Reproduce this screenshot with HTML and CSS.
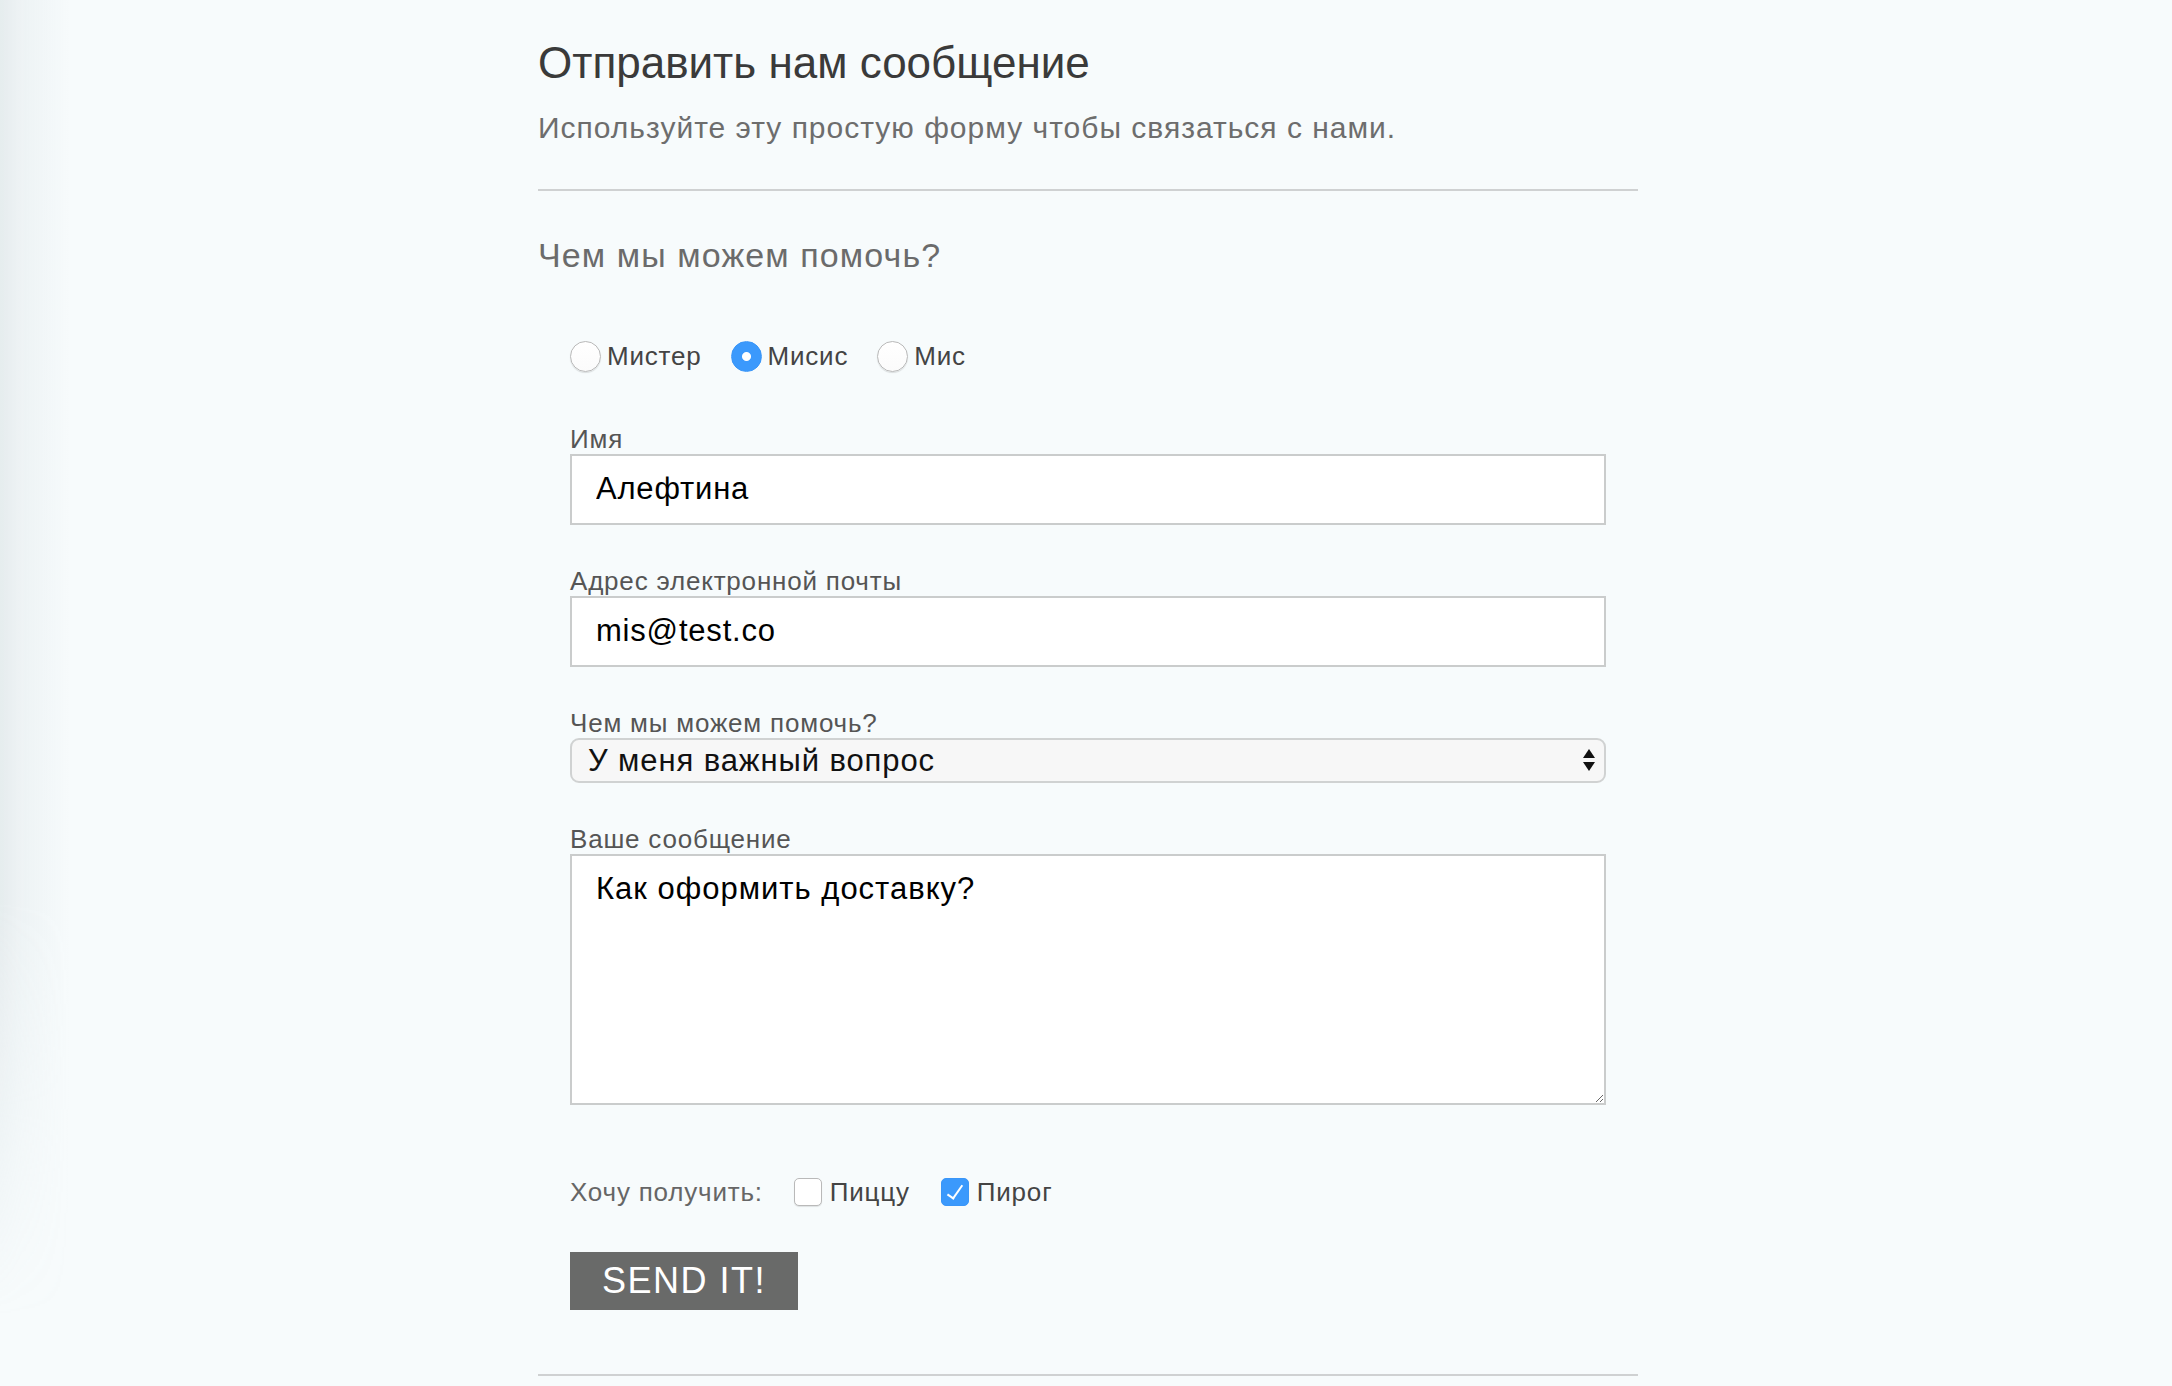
FILE: index.html
```html
<!DOCTYPE html>
<html lang="ru">
<head>
<meta charset="utf-8">
<title>Отправить нам сообщение</title>
<link rel="stylesheet" href="styles.css">
</head>
<body>
<main class="page">
  <header class="intro">
    <h1 class="title">Отправить нам сообщение</h1>
    <p class="lead">Используйте эту простую форму чтобы связаться с нами.</p>
  </header>
  <hr class="rule">
  <form class="contact">
    <h2 class="section-title">Чем мы можем помочь?</h2>
    <div class="fields">
      <div class="radios">
        <label class="choice"><input type="radio" name="title" class="radio"><span>Мистер</span></label>
        <label class="choice"><input type="radio" name="title" class="radio" checked><span>Мисис</span></label>
        <label class="choice"><input type="radio" name="title" class="radio"><span>Мис</span></label>
      </div>
      <div class="field">
        <label class="field-label" for="name">Имя</label>
        <input class="text-input" id="name" type="text" value="Алефтина">
      </div>
      <div class="field">
        <label class="field-label" for="email">Адрес электронной почты</label>
        <input class="text-input" id="email" type="email" value="mis@test.co">
      </div>
      <div class="field">
        <label class="field-label" for="topic">Чем мы можем помочь?</label>
        <div class="select-wrap">
          <select class="select" id="topic">
            <option selected>У меня важный вопрос</option>
          </select>
          <svg class="select-arrows" width="14" height="24" viewBox="0 0 14 24" aria-hidden="true">
            <path d="M7 1 L13 10 L1 10 Z" fill="#111"/>
            <path d="M1 14 L13 14 L7 23 Z" fill="#111"/>
          </svg>
        </div>
      </div>
      <div class="field">
        <label class="field-label" for="msg">Ваше сообщение</label>
        <textarea class="textarea" id="msg">Как оформить доставку?</textarea>
      </div>
      <div class="wants">
        <span class="wants-label">Хочу получить:</span>
        <label class="choice check-choice"><input type="checkbox" class="checkbox"><span>Пиццу</span></label>
        <label class="choice check-choice"><input type="checkbox" class="checkbox" checked><span>Пирог</span></label>
      </div>
      <button type="button" class="send">SEND IT!</button>
    </div>
  </form>
  <hr class="rule rule-bottom">
</main>
</body>
</html>
```
FILE: styles.css
```css
html, body {
  margin: 0;
  padding: 0;
}
body {
  background: #f7fbfc;
  font-family: "Liberation Sans", Arial, sans-serif;
  padding-left: 4px;
  min-height: 1386px;
  box-sizing: border-box;
}
body::before {
  content: "";
  position: fixed;
  left: 0;
  top: 0;
  width: 70px;
  height: 100%;
  pointer-events: none;
  background: linear-gradient(to right, rgba(170, 185, 190, 0.22) 0, rgba(170, 185, 190, 0.12) 20px, rgba(170, 185, 190, 0) 70px);
  -webkit-mask-image: linear-gradient(to bottom, #000 0, #000 65%, transparent 95%);
  mask-image: linear-gradient(to bottom, #000 0, #000 65%, transparent 95%);
}
.page {
  width: 1100px;
  margin: 0 auto;
  padding-top: 37px;
}
.title {
  margin: 0;
  font-size: 44px;
  line-height: 52px;
  font-weight: normal;
  color: #3a3a3a;
}
.lead {
  margin: 22px 0 0;
  font-size: 30px;
  letter-spacing: 1px;
  line-height: 34px;
  color: #6d6d6d;
}
.rule {
  margin: 44px 0 0;
  border: 0;
  height: 2px;
  background: #cfd1d2;
}
.rule-bottom {
  margin-top: 64px;
}
.contact {
  margin: 0;
}
.section-title {
  margin: 44px 0 0;
  font-size: 34px;
  letter-spacing: 1.1px;
  line-height: 40px;
  font-weight: normal;
  color: #6b6b6b;
}
.fields {
  padding: 0 32px;
}
.radios {
  margin-top: 65px;
  display: flex;
  align-items: center;
  gap: 29px;
  height: 32px;
}
.choice {
  display: inline-flex;
  align-items: center;
  gap: 6px;
  font-size: 26px;
  letter-spacing: 0.8px;
  line-height: 32px;
  color: #444;
}
.radio {
  -webkit-appearance: none;
  appearance: none;
  margin: 0;
  width: 31px;
  height: 31px;
  border-radius: 50%;
  border: 1px solid #b9b9b9;
  background: linear-gradient(#ffffff, #fbfbfb);
  box-shadow: 0 1px 1px rgba(0, 0, 0, 0.12);
  box-sizing: border-box;
}
.radio:checked {
  border-color: #3a96f8;
  background: radial-gradient(circle, #fff 0, #fff 4px, #3b99fc 5px);
  box-shadow: none;
}
.field {
  margin-top: 41px;
  display: flex;
  flex-direction: column;
}
.radios + .field {
  margin-top: 52px;
}
.field-label {
  font-size: 26px;
  letter-spacing: 0.8px;
  line-height: 30px;
  color: #555;
}
.text-input,
.textarea {
  box-sizing: border-box;
  width: 100%;
  margin: 0;
  border: 2px solid #cacccc;
  background: #fff;
  font-family: "Liberation Sans", Arial, sans-serif;
  font-size: 31px;
  letter-spacing: 0.8px;
  line-height: 34px;
  color: #000;
  padding: 16px 24px 17px;
  border-radius: 0;
  outline: none;
}
.text-input {
  height: 71px;
}
.textarea {
  height: 251px;
  resize: both;
  display: block;
  letter-spacing: 1px;
}
.select-wrap {
  position: relative;
}
.select {
  -webkit-appearance: none;
  appearance: none;
  box-sizing: border-box;
  width: 100%;
  height: 45px;
  margin: 0;
  border: 2px solid #d0d2d2;
  border-radius: 9px;
  background: #f7f7f7;
  font-family: "Liberation Sans", Arial, sans-serif;
  font-size: 31px;
  letter-spacing: 0.9px;
  color: #111;
  padding: 0 40px 0 16px;
  outline: none;
}
.select-arrows {
  position: absolute;
  right: 10px;
  top: 10px;
  pointer-events: none;
}
.wants {
  margin-top: 71px;
  display: flex;
  align-items: center;
  height: 32px;
  gap: 31px;
}
.wants-label {
  font-size: 26px;
  letter-spacing: 0.8px;
  line-height: 32px;
  color: #666;
}
.check-choice {
  gap: 8px;
}
.checkbox {
  -webkit-appearance: none;
  appearance: none;
  margin: 0;
  width: 28px;
  height: 28px;
  border-radius: 5px;
  border: 1px solid #b9b9b9;
  background: #fff;
  box-shadow: 0 1px 1px rgba(0, 0, 0, 0.1);
  box-sizing: border-box;
  position: relative;
}
.checkbox:checked {
  background: #3b99fc;
  border-color: #3a96f8;
  box-shadow: none;
}
.checkbox:checked::after {
  content: "";
  position: absolute;
  left: 9px;
  top: 3px;
  width: 6px;
  height: 15px;
  border: solid #fff;
  border-width: 0 2px 2px 0;
  transform: rotate(35deg);
}
.send {
  display: block;
  margin-top: 44px;
  height: 58px;
  padding: 0 32px;
  border: 0;
  border-radius: 0;
  background: #696a69;
  color: #fff;
  font-family: "Liberation Sans", Arial, sans-serif;
  font-size: 36px;
  letter-spacing: 1.5px;
}
```
